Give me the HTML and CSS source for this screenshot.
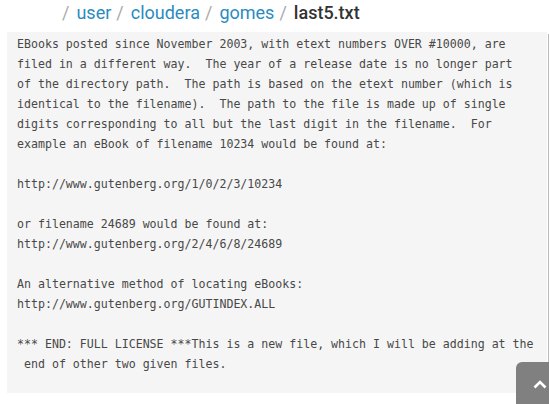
FILE: index.html
```html
<!DOCTYPE html>
<html>
<head>
<meta charset="utf-8">
<link rel="stylesheet" href="styles.css">
</head>
<body>
<div class="page">
  <nav class="crumbs">
    <span class="sep">/</span><a class="link">user</a><span class="sep">/</span><a class="link">cloudera</a><span class="sep">/</span><a class="link">gomes</a><span class="sep">/</span><span class="current">last5.txt</span>
  </nav>
  <div class="body">
<pre class="file">EBooks posted since November 2003, with etext numbers OVER #10000, are
filed in a different way.  The year of a release date is no longer part
of the directory path.  The path is based on the etext number (which is
identical to the filename).  The path to the file is made up of single
digits corresponding to all but the last digit in the filename.  For
example an eBook of filename 10234 would be found at:

http://www.gutenberg.org/1/0/2/3/10234

or filename 24689 would be found at:
http://www.gutenberg.org/2/4/6/8/24689

An alternative method of locating eBooks:
http://www.gutenberg.org/GUTINDEX.ALL

*** END: FULL LICENSE ***This is a new file, which I will be adding at the
 end of other two given files.
</pre>
    <div class="side"></div>
  </div>
</div>
<button class="totop" aria-label="Back to top"><svg width="14" height="9" viewBox="0 0 14 9"><path d="M1.5 7.5 L7 2 L12.5 7.5" fill="none" stroke="#fff" stroke-width="2.6"/></svg></button>
</body>
</html>
```
FILE: styles.css
```css
html, body {
  margin: 0;
  padding: 0;
  background: #fff;
  overflow: hidden;
}
.page {
  width: 549px;
  height: 404px;
}
.crumbs {
  height: 32px;
  padding-left: 62px;
  font-family: Roboto, "Noto Sans", sans-serif;
  font-size: 18px;
  line-height: 26px;
  display: flex;
  align-items: baseline;
  white-space: nowrap;
}
.sep {
  color: #aaa;
  margin-right: 7px;
}
.link {
  color: #2a8bbf;
  margin-right: 5px;
}
.current {
  color: #333;
  font-weight: 500;
}
.body {
  display: flex;
  align-items: flex-start;
}
.file {
  margin: 0 0 0 7px;
  width: 520px;
  flex: 0 0 520px;
  padding: 2px 10px 19px 10px;
  background: #f5f5f5;
  font-family: "DejaVu Sans Mono", "Liberation Mono", monospace;
  font-size: 11.6px;
  line-height: 20px;
  color: #484848;
  white-space: pre;
  overflow: hidden;
  height: 340px;
}
.side {
  margin-left: 1px;
  margin-top: 2px;
  height: 370px;
  flex: 1;
  border-left: 1px solid #bbb;
  border-top: 1px solid #bbb;
  background: #fff;
}
.totop {
  position: fixed;
  left: 516px;
  top: 362px;
  width: 40px;
  height: 48px;
  border: 0;
  border-radius: 6px;
  background: #808080;
  padding: 0 0 0 3px;
  display: flex;
  align-items: flex-start;
  justify-content: flex-start;
  cursor: pointer;
}
.totop svg {
  margin-left: 14px;
  margin-top: 18px;
}
```
